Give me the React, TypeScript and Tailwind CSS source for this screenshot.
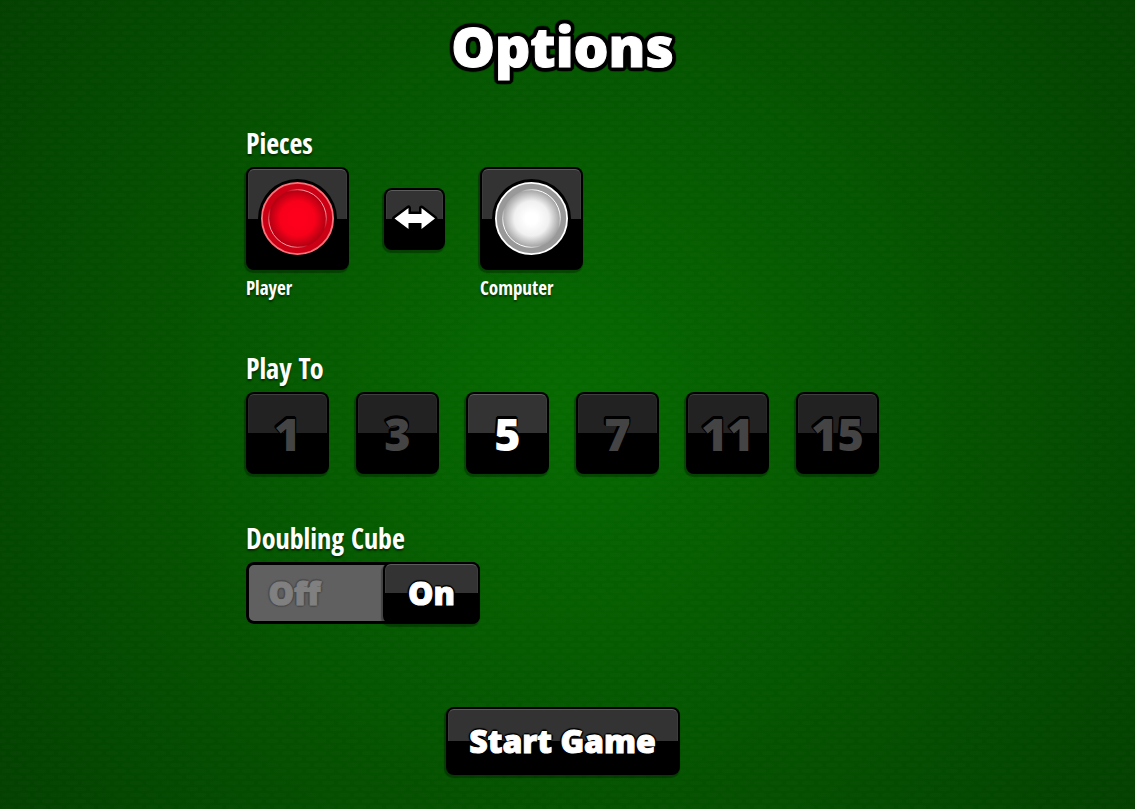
import { useState } from "react";

const gloss =
  "relative flex items-center justify-center rounded-lg bg-black shadow-[-1px_2px_1px_1px_rgba(0,0,0,0.3)] before:absolute before:inset-x-[2px] before:top-[2px] before:bottom-1/2 before:rounded-t-md before:border before:border-b-0";
const lit = "before:border-x-[#3c3c3c] before:border-t-[#5c5c5c] before:bg-[#333]";
const dim = "before:border-x-[#282828] before:border-t-[#3e3e3e] before:bg-[#222]";

const heavy = "font-extrabold [-webkit-text-stroke:1px_currentColor]";
const wideRing =
  "[text-shadow:0_-4px_1px_black,2px_-4px_1px_black,3px_-3px_1px_black,4px_-2px_1px_black,4px_0_1px_black,4px_2px_1px_black,3px_3px_1px_black,2px_4px_1px_black,0_4px_1px_black,-2px_4px_1px_black,-3px_3px_1px_black,-4px_2px_1px_black,-4px_0_1px_black,-4px_-2px_1px_black,-3px_-3px_1px_black,-2px_-4px_1px_black]";
const thinRing =
  "[text-shadow:0_-2px_1px_black,1px_-1px_1px_black,2px_0_1px_black,1px_1px_1px_black,0_2px_1px_black,-1px_1px_1px_black,-2px_0_1px_black,-1px_-1px_1px_black]";
const raisedRing =
  "[text-shadow:0_-3px_0_black,-1px_-3px_0_black,1px_-2px_0_black,-2px_-2px_0_black,-2px_-1px_0_black,1px_0_0_black,-1px_0_0_black]";

const condensed =
  "font-['Open_Sans_Condensed','Noto_Sans_Condensed','Liberation_Sans_Narrow','Roboto_Condensed',sans-serif] font-bold text-white [text-shadow:0_2px_2px_rgba(0,0,0,0.5)]";

type Tone = { rim: string; band: string; core: string; mid: string; edge: string; glint: string };

const red: Tone = { rim: "#ff7078", band: "#cc0014", core: "#ff001c", mid: "#f8001a", edge: "#b00012", glint: "#ff9aa0" };
const white: Tone = { rim: "#ffffff", band: "#999999", core: "#ffffff", mid: "#f0f0f0", edge: "#a0a0a0", glint: "#ffffff" };

function Piece({ id, tone }: { id: string; tone: Tone }) {
  return (
    <svg viewBox="0 0 80 80" className="relative h-20 w-20" aria-hidden="true">
      <defs>
        <radialGradient id={`${id}-core`}>
          <stop offset="0.2" stopColor={tone.core} />
          <stop offset="0.6" stopColor={tone.mid} />
          <stop offset="1" stopColor={tone.edge} />
        </radialGradient>
        <linearGradient id={`${id}-glint`} x1="0" y1="1" x2="1" y2="0">
          <stop offset="0.2" stopColor={tone.glint} />
          <stop offset="0.36" stopColor={tone.glint} stopOpacity="0" />
          <stop offset="0.64" stopColor={tone.glint} stopOpacity="0" />
          <stop offset="0.8" stopColor={tone.glint} />
        </linearGradient>
      </defs>
      <circle cx="39.500" cy="39.500" r="39.500" fill="#000" />
      <circle cx="39.500" cy="39.500" r="35.6" fill={tone.band} stroke={tone.rim} strokeWidth="1.8" />
      <circle cx="39.500" cy="39.500" r="29" fill={`url(#${id}-core)`} />
      <circle cx="39.500" cy="39.500" r="28.8" fill="none" stroke={`url(#${id}-glint)`} strokeWidth="1" />
    </svg>
  );
}

function Player({ name, tone }: { name: string; tone: Tone }) {
  return (
    <figure className="w-[103px]">
      <div className={`${gloss} ${lit} h-[103px]`}>
        <Piece id={name} tone={tone} />
      </div>
      <figcaption className={`${condensed} mt-[6px] text-[19px] leading-6`}>{name}</figcaption>
    </figure>
  );
}

const heading = `${condensed} mb-2 text-[28px] leading-8`;
const lengths = [1, 3, 5, 7, 11, 15];

export default function App() {
  const [playTo, setPlayTo] = useState(5);
  const [cube, setCube] = useState(true);
  const [swapped, setSwapped] = useState(false);

  return (
    <main className="relative isolate flex min-h-screen flex-col items-center bg-[radial-gradient(circle_farthest-corner,#066a00,#034100)] pr-[10px] pb-8 font-['Open_Sans',sans-serif]">
      <svg className="absolute inset-0 -z-10 h-full w-full" aria-hidden="true">
        <defs>
          <pattern id="felt" width="16" height="12" patternUnits="userSpaceOnUse">
            <ellipse cx="8" cy="3" rx="6" ry="2" fill="#fff" fillOpacity="0.012" />
            <ellipse cx="0" cy="9" rx="6" ry="2" fill="#fff" fillOpacity="0.012" />
            <ellipse cx="16" cy="9" rx="6" ry="2" fill="#fff" fillOpacity="0.012" />
          </pattern>
        </defs>
        <rect width="100%" height="100%" fill="url(#felt)" />
      </svg>

      <h1 className={`${wideRing} ${heavy} mt-1 text-[55px] leading-[84px] text-white`}>Options</h1>

      <div className="mt-[39px]">
        <section>
          <h2 className={heading}>Pieces</h2>
          <div className="flex items-start gap-[35px]">
            <Player name="Player" tone={swapped ? white : red} />
            <button type="button" aria-label="Swap pieces" onClick={() => setSwapped(!swapped)} className={`${gloss} ${lit} mt-[21px] h-[62px] w-[61px]`}>
              <svg viewBox="0 0 50 30" className="relative h-[30px] w-[50px]" aria-hidden="true">
                <path d="M4.500 14.500 18.500 4V10H31.500V4L45 14.500 31.500 25V19H18.500V25Z" fill="#fff" stroke="#000" strokeWidth="5" strokeLinejoin="round" paintOrder="stroke" />
              </svg>
            </button>
            <Player name="Computer" tone={swapped ? red : white} />
          </div>
        </section>

        <section className="mt-[52px]">
          <h2 className={heading}>Play To</h2>
          <div className="flex gap-[27px]">
            {lengths.map((n) => (
              <button
                key={n}
                type="button"
                aria-pressed={playTo === n}
                onClick={() => setPlayTo(n)}
                className={`${gloss} ${playTo === n ? lit : dim} h-[82px] w-[83px]`}
              >
                <span className={`${raisedRing} relative text-[45px] leading-none font-extrabold ${playTo === n ? "text-white" : "text-[#444]"}`}>{n}</span>
              </button>
            ))}
          </div>
        </section>

        <section className="mt-12">
          <h2 className={heading}>Doubling Cube</h2>
          <button
            type="button"
            role="switch"
            aria-checked={cube}
            aria-label="Doubling Cube"
            onClick={() => setCube(!cube)}
            className={`flex h-[62px] w-[234px] items-center rounded-lg bg-[#606060] text-[32px] leading-none shadow-[inset_0_0_0_3px_black] ${cube ? "" : "flex-row-reverse"}`}
          >
            <span className={`${thinRing} ${heavy} flex-1 pr-10 text-center text-white opacity-20`}>{cube ? "Off" : "On"}</span>
            <span className={`${gloss} ${lit} h-full w-[97px]`}>
              <span className={`${thinRing} ${heavy} relative text-white`}>{cube ? "On" : "Off"}</span>
            </span>
          </button>
        </section>
      </div>

      <button type="button" className={`${gloss} ${lit} mt-[83px] h-[68px] w-[234px]`}>
        <span className={`${thinRing} ${heavy} relative text-[32px] leading-none text-white`}>Start Game</span>
      </button>
    </main>
  );
}
